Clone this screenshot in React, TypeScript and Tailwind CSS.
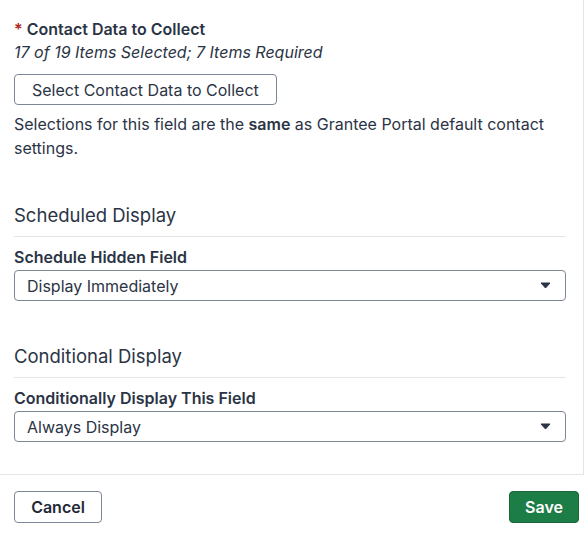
import React from "react";

function Caret() {
  return (
    <svg width="11" height="7" viewBox="0 0 11 7" className="shrink-0">
      <path d="M1 1 L10 1 L5.5 6 Z" fill="#2b3445" stroke="#2b3445" strokeWidth="1" strokeLinejoin="round" />
    </svg>
  );
}

function Select({ value }: { value: string }) {
  return (
    <div className="flex h-[31px] items-center justify-between rounded-[4px] border border-[#7b8794] bg-white pl-[12px] pr-[14px] text-[16px] text-[#2b3445]">
      <span>{value}</span>
      <Caret />
    </div>
  );
}

export default function App() {
  return (
    <div className="flex h-[535px] w-[586px] flex-col bg-white text-[#2b3445]" style={{ fontFamily: "Inter, 'Noto Sans', sans-serif" }}>
      <div className="h-[475px] w-[584px] border-r border-b border-[#e2e5e9] pl-[14px] pr-[17px] pt-[18px]">
        <div className="flex items-baseline text-[16px] font-semibold leading-[22px]">
          <span className="mr-[4px] text-[#b3261e]">*</span>
          <span>Contact Data to Collect</span>
        </div>
        <div className="text-[16px] italic leading-[24px]">17 of 19 Items Selected; 7 Items Required</div>
        <button className="mt-[10px] flex h-[31px] items-center rounded-[4px] border border-[#7b8794] bg-white px-[17px] text-[16px] text-[#2b3445]">
          Select Contact Data to Collect
        </button>
        <p className="mt-[7px] text-[16px] leading-[24px]">
          Selections for this field are the <span className="font-semibold">same</span> as Grantee Portal default contact settings.
        </p>

        <div className="mt-[42px] text-[18.5px] leading-[26px]">Scheduled Display</div>
        <div className="mt-[8px] h-px bg-[#e2e5e9]" />
        <div className="mt-[9px] text-[16px] font-semibold leading-[22px]">Schedule Hidden Field</div>
        <div className="mt-[2px]">
          <Select value="Display Immediately" />
        </div>

        <div className="mt-[42px] text-[18.5px] leading-[26px]">Conditional Display</div>
        <div className="mt-[8px] h-px bg-[#e2e5e9]" />
        <div className="mt-[9px] text-[16px] font-semibold leading-[22px]">Conditionally Display This Field</div>
        <div className="mt-[2px]">
          <Select value="Always Display" />
        </div>
      </div>
      <div className="flex items-start justify-between pl-[14px] pr-[7px] pt-[16px]">
        <button className="flex h-[32px] w-[88px] items-center justify-center rounded-[4px] border border-[#7b8794] bg-white text-[16px] font-semibold text-[#1f2937]">
          Cancel
        </button>
        <button className="flex h-[32px] w-[70px] items-center justify-center rounded-[4px] border border-[#18663a] bg-[#1c7d46] text-[16px] font-semibold text-white">
          Save
        </button>
      </div>
    </div>
  );
}
